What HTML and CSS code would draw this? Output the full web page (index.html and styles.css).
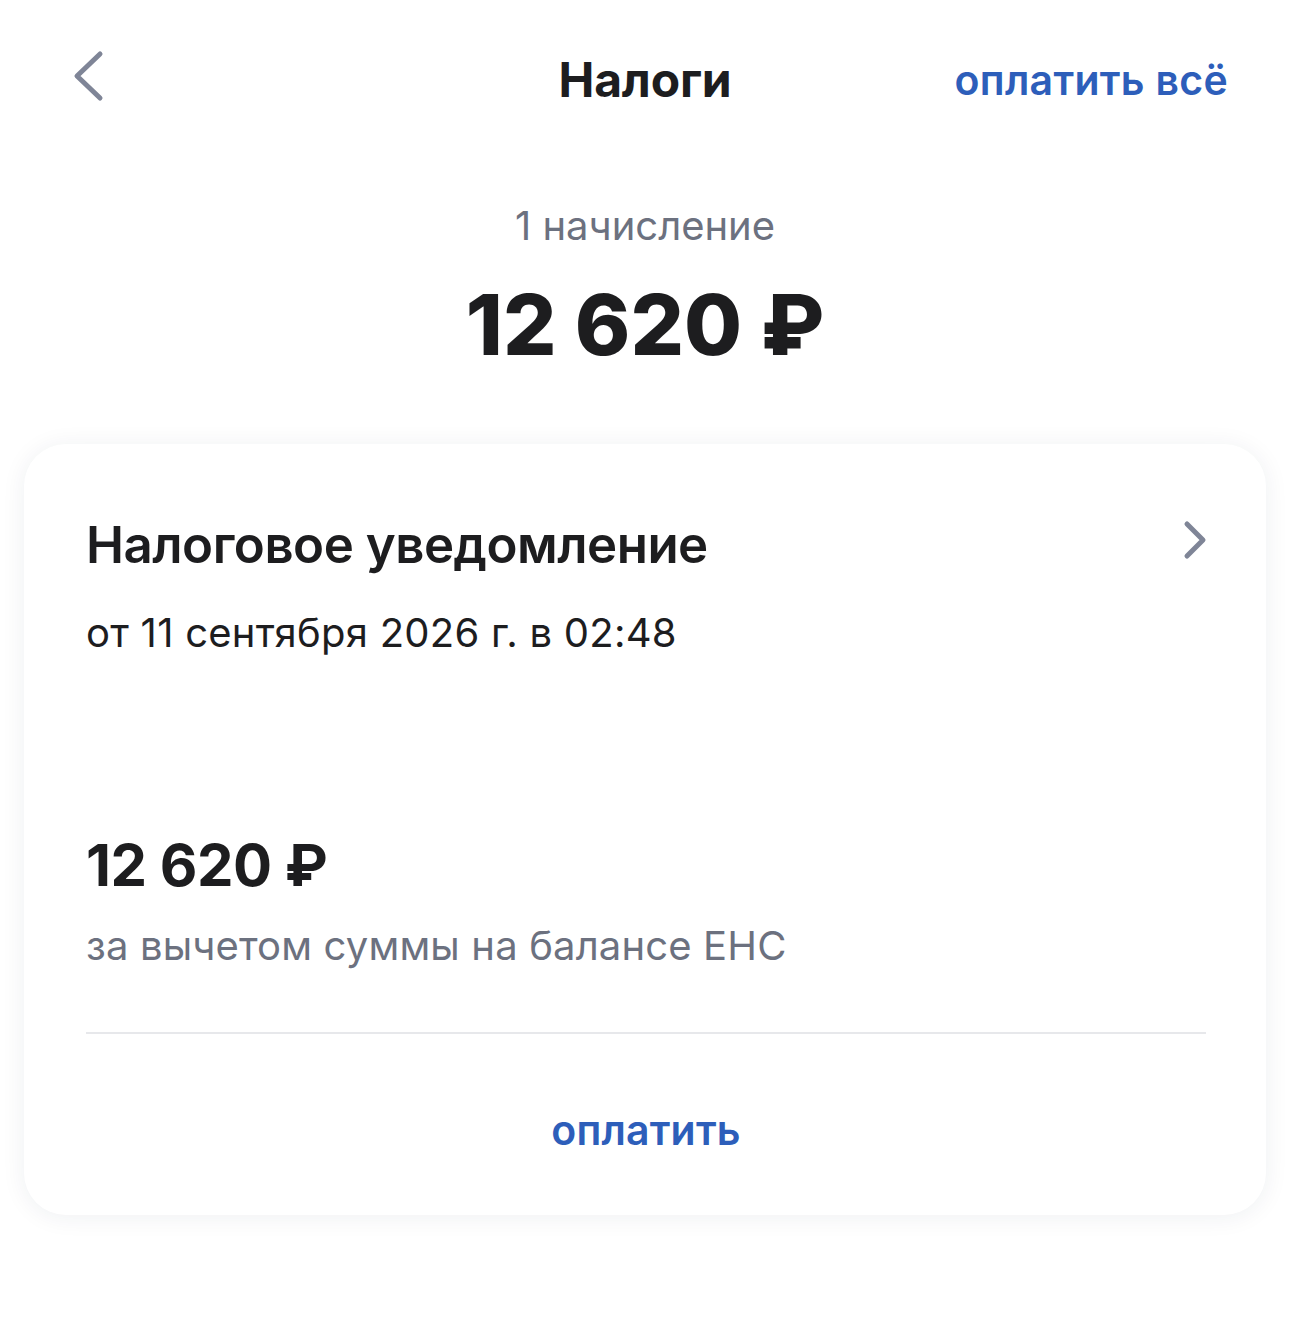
FILE: index.html
```html
<!DOCTYPE html>
<html lang="ru">
<head>
<meta charset="utf-8">
<title>Налоги</title>
<link rel="stylesheet" href="styles.css">
</head>
<body>
<div class="page">
  <header class="nav">
    <div class="nav-left">
      <svg class="back" width="40" height="56" viewBox="0 0 40 56" aria-hidden="true">
        <path d="M29 4 L6 26 L29 48" fill="none" stroke="#7f8597" stroke-width="5" stroke-linecap="round" stroke-linejoin="round"/>
      </svg>
    </div>
    <h1 class="nav-title">Налоги</h1>
    <div class="nav-right"><a class="link pay-all" href="#">оплатить всё</a></div>
  </header>

  <section class="summary">
    <div class="count">1 начисление</div>
    <div class="total">12 620 ₽</div>
  </section>

  <section class="card">
    <div class="card-head">
      <div class="card-title">Налоговое уведомление</div>
      <svg class="chev" width="30" height="40" viewBox="0 0 30 40" aria-hidden="true">
        <path d="M7 4 L23 20 L7 36" fill="none" stroke="#7f8597" stroke-width="5" stroke-linecap="round" stroke-linejoin="round"/>
      </svg>
    </div>
    <div class="card-date">от 11 сентября 2026 г. в 02:48</div>
    <div class="card-amount">12 620 ₽</div>
    <div class="card-sub">за вычетом суммы на балансе ЕНС</div>
    <div class="divider"></div>
    <div class="card-action"><a class="link pay" href="#">оплатить</a></div>
  </section>
</div>
</body>
</html>
```

FILE: styles.css
```css
* { box-sizing: border-box; }
html, body { margin: 0; padding: 0; background: #ffffff; }
body {
  font-family: Inter, "Noto Sans", "DejaVu Sans", sans-serif;
  color: #1d1d1f;
  -webkit-font-smoothing: antialiased;
}
.page { width: 1290px; min-height: 1322px; }

.nav {
  height: 160px;
  display: grid;
  grid-template-columns: 1fr auto 1fr;
  align-items: center;
  padding: 0 62px;
}
.nav-left { display: flex; align-items: center; padding-left: 9px; }
.back { display: block; margin-top: -4px; }
.nav-title {
  margin: 0;
  font-size: 48px;
  font-weight: 700;
  letter-spacing: -0.2px;
  color: #1d1d1f;
  line-height: 60px;
}
.nav-right { display: flex; justify-content: flex-end; }
.link { color: #2d5eba; text-decoration: none; font-weight: 600; }
.pay-all { font-size: 41px; line-height: 50px; letter-spacing: 0.3px; }

.summary { text-align: center; padding-top: 41px; }
.count {
  font-size: 40px;
  line-height: 50px;
  color: #6c717f;
  font-weight: 400;
}
.total {
  margin-top: 24px;
  font-size: 84px;
  line-height: 100px;
  font-weight: 800;
  letter-spacing: 0;
  color: #1d1d1f;
}

.card {
  margin: 69px 24px 0;
  background: #fff;
  border-radius: 42px;
  box-shadow: 0 2px 24px rgba(30, 40, 70, 0.07);
  padding: 67px 60px 60px 62px;
}
.card-head { display: flex; align-items: center; justify-content: space-between; }
.card-title {
  font-size: 51px;
  line-height: 68px;
  font-weight: 600;
  letter-spacing: -0.5px;
  color: #1d1d1f;
}
.chev { display: block; margin-right: -4px; margin-top: -10px; }
.card-date {
  margin-top: 29px;
  font-size: 40px;
  line-height: 50px;
  letter-spacing: 0.25px;
  color: #1d1d1f;
}
.card-amount {
  margin-top: 173px;
  font-size: 58px;
  line-height: 68px;
  font-weight: 700;
  letter-spacing: -0.5px;
  color: #1d1d1f;
}
.card-sub {
  margin-top: 22px;
  font-size: 40px;
  line-height: 50px;
  letter-spacing: 0.15px;
  color: #6c717f;
}
.divider {
  margin-top: 61px;
  height: 2px;
  background: #e7e8eb;
}
.card-action { margin-top: 71px; text-align: center; }
.pay { font-size: 41px; line-height: 50px; letter-spacing: 0.2px; }
```
